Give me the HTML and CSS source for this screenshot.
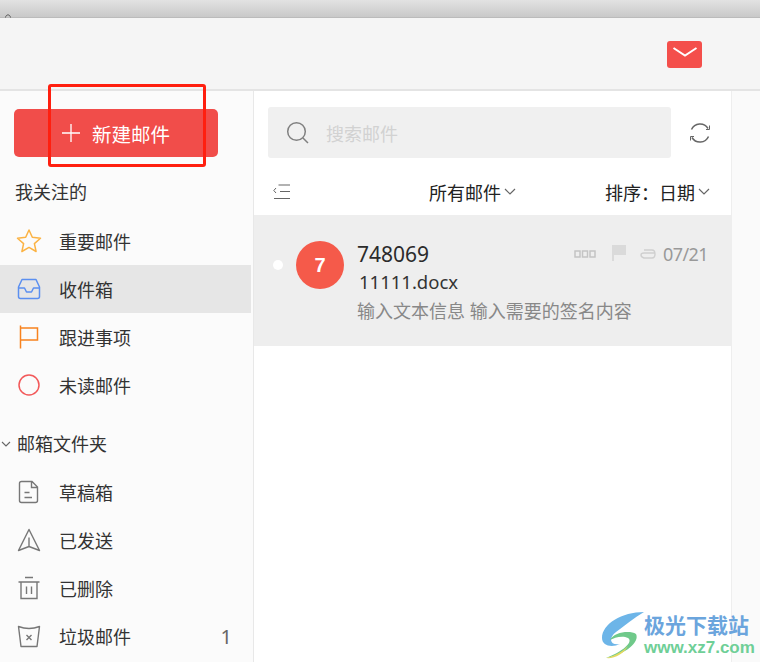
FILE: index.html
```html
<!DOCTYPE html>
<html lang="zh-CN">
<head>
  <meta charset="UTF-8" />
  <title>邮件</title>
  <link rel="stylesheet" href="styles.css">
</head>
<body>
  <div class="top-strip">
    <svg class="strip-mark" width="8" height="5" viewBox="0 0 8 5"><path d="M1.5 4.5 C2 1 6 1 6.500 4.500" fill="none" stroke="#555" stroke-width="1"/></svg>
  </div>

  <header class="header">
    <div class="mail-badge">
      <svg width="26" height="12" viewBox="0 0 26 12"><path d="M1.500 2 L13 9.500 L24.500 2" fill="none" stroke="#fff" stroke-width="2"/></svg>
    </div>
  </header>

  <div class="main">
    <aside class="sidebar">
      <button class="new-btn">
        <svg width="18" height="18" viewBox="0 0 18 18"><path d="M9 0 V18 M0 9 H18" stroke="#fff" stroke-width="1.300"/></svg>
        <span>新建邮件</span>
      </button>

      <div class="side-title">我关注的</div>
      <div class="side-item">
        <svg class="side-icon" viewBox="0 0 26 26"><path d="M13 2 L16.300 9.300 L24.500 10.200 L18.400 15.600 L20.100 23.500 L13 19.400 L5.900 23.500 L7.600 15.600 L1.500 10.200 L9.700 9.300 Z" fill="none" stroke="#fbb344" stroke-width="1.500" stroke-linejoin="round"/></svg>
        <span>重要邮件</span>
      </div>
      <div class="side-item active">
        <svg class="side-icon" viewBox="0 0 26 26"><path d="M6 3.500 H20 L23.500 11 V20.500 Q23.500 22.500 21.500 22.500 H4.500 Q2.500 22.500 2.500 20.500 V11 Z M2.500 12 H8.500 L10.500 16 H15.500 L17.500 12 H23.500" fill="none" stroke="#5b8ff0" stroke-width="1.500" stroke-linejoin="round"/></svg>
        <span>收件箱</span>
      </div>
      <div class="side-item">
        <svg class="side-icon" viewBox="0 0 26 26"><path d="M4.500 1.500 V24.500 M4.500 4 H21.500 V16 H4.500" fill="none" stroke="#f8821e" stroke-width="1.500"/></svg>
        <span>跟进事项</span>
      </div>
      <div class="side-item">
        <svg class="side-icon" viewBox="0 0 26 26"><circle cx="13" cy="13" r="10" fill="none" stroke="#f2595a" stroke-width="1.500"/></svg>
        <span>未读邮件</span>
      </div>

      <div class="folder-title">
        <svg width="10" height="6" viewBox="0 0 10 6"><path d="M1 1 L5 5 L9 1" fill="none" stroke="#666" stroke-width="1.100"/></svg>
        <span>邮箱文件夹</span>
      </div>
      <div class="side-item">
        <svg class="side-icon" viewBox="0 0 26 26"><path d="M5.500 2.500 H16 L21.500 8 V21.500 Q21.500 23.500 19.500 23.500 H5.500 Q3.500 23.500 3.500 21.500 V4.500 Q3.500 2.500 5.500 2.500 Z M15.500 2.500 V8.500 H21.500 M8.500 13.500 H13.500 M8.500 18.500 H16" fill="none" stroke="#777" stroke-width="1.400"/></svg>
        <span>草稿箱</span>
      </div>
      <div class="side-item">
        <svg class="side-icon" viewBox="0 0 26 26"><path d="M13 2.500 L23.500 23.500 L13 19.500 L2.500 23.500 Z M13 10.500 V19.500" fill="none" stroke="#777" stroke-width="1.400" stroke-linejoin="round"/></svg>
        <span>已发送</span>
      </div>
      <div class="side-item">
        <svg class="side-icon" viewBox="0 0 26 26"><path d="M2.500 7 H23.500 M9 2.500 H17 M5 7 V23.500 H21 V7 M10.500 11.500 V19 M15.500 11.500 V19" fill="none" stroke="#777" stroke-width="1.400"/></svg>
        <span>已删除</span>
      </div>
      <div class="side-item">
        <svg class="side-icon" viewBox="0 0 26 26"><path d="M2.500 3.500 Q13 7.500 23.500 3.500 L21 23.500 H5 Z M10.500 12 L15.500 17 M15.500 12 L10.500 17" fill="none" stroke="#777" stroke-width="1.400" stroke-linejoin="round"/></svg>
        <span>垃圾邮件</span>
        <span class="count">1</span>
      </div>
    </aside>

    <section class="list">
      <div class="search-row">
        <div class="search-box">
          <svg width="24" height="24" viewBox="0 0 24 24"><circle cx="10.500" cy="10.500" r="8.800" fill="none" stroke="#808080" stroke-width="1.500"/><path d="M17 17 L22 22" stroke="#808080" stroke-width="1.500"/></svg>
          <span>搜索邮件</span>
        </div>
        <svg width="22" height="22" viewBox="0 0 22 22"><path d="M2.500 7.500 A9.300 9.300 0 0 1 19 6.500 M19.500 14.500 A9.300 9.300 0 0 1 3 15.500" fill="none" stroke="#666" stroke-width="1.500"/><path d="M20.500 3.500 V7.500 H17 M1.500 18.500 V14.500 H5" fill="none" stroke="#666" stroke-width="1"/></svg>
      </div>

      <div class="filter-row">
        <svg class="filter-icon" width="18" height="16" viewBox="0 0 18 16"><path d="M5.500 1 H17 M7 7.500 H17 M1 14.500 H17" fill="none" stroke="#666" stroke-width="1.200"/><path d="M3 4 L0.800 6.500 L3 9" fill="none" stroke="#666" stroke-width="1"/></svg>
        <div class="filter-all">
          <span>所有邮件</span>
          <svg width="12" height="7" viewBox="0 0 12 7"><path d="M1 1 L6 6 L11 1" fill="none" stroke="#666" stroke-width="1.200"/></svg>
        </div>
        <div class="filter-sort">
          <span>排序：日期</span>
          <svg width="12" height="7" viewBox="0 0 12 7"><path d="M1 1 L6 6 L11 1" fill="none" stroke="#666" stroke-width="1.200"/></svg>
        </div>
      </div>

      <div class="mail-row">
        <div class="dot"></div>
        <div class="avatar">7</div>
        <div class="mail-body">
          <div class="mail-top">
            <span class="sender">748069</span>
            <div class="mail-meta">
              <svg width="22" height="8" viewBox="0 0 22 8"><path d="M1 1 H6 V7 H1 Z M8.500 1 H13.500 V7 H8.500 Z M16 1 H21 V7 H16 Z" fill="none" stroke="#c4c4c4" stroke-width="1.500"/></svg>
              <svg class="meta-flag" width="14" height="16" viewBox="0 0 14 16"><path d="M0 0 H14 V10 H2 V16 H0 Z" fill="#dadada"/></svg>
              <svg class="meta-clip" width="16" height="10" viewBox="0 0 16 10"><path d="M15 4 H4 Q1 4 1 6 T4 9 H12 Q15 9 15 5 T12 1 H4" fill="none" stroke="#cfcfcf" stroke-width="1.400"/></svg>
              <span class="date">07/21</span>
            </div>
          </div>
          <div class="subject">11111.docx</div>
          <div class="preview">输入文本信息 输入需要的签名内容</div>
        </div>
      </div>
    </section>

    <div class="detail"></div>
  </div>

  <div class="red-box"></div>

  <div class="watermark">
    <svg width="44" height="50" viewBox="0 0 44 50">
      <path d="M44 2 C22 2 2 14 2 28 C2 36 12 38 20 34 C10 36 8 28 16 22 C24 16 34 8 44 2 Z" fill="#6db5e8"/>
      <path d="M10 30 C14 22 30 20 36 24 C40 32 26 44 6 48 C22 42 34 32 28 28 C22 25 14 28 10 30 Z" fill="#6fc98a"/>
      <path d="M6 48 C14 46 22 42 28 36 C24 44 14 49 6 48 Z" fill="#e3d95f"/>
    </svg>
    <div class="wm-text">
      <div class="wm-title">极光下载站</div>
      <div class="wm-url">www.xz7.com</div>
    </div>
  </div>
</body>
</html>
```

FILE: styles.css
```css
* {
  box-sizing: border-box;
}

body {
  margin: 0;
  width: 760px;
  height: 662px;
  overflow: hidden;
  position: relative;
  display: flex;
  flex-direction: column;
  font-family: "Noto Sans", "Noto Sans CJK SC", sans-serif;
  font-size: 18px;
  color: #333;
  background-color: #fafafa;
}

svg {
  display: block;
  flex-shrink: 0;
}

.top-strip {
  height: 18px;
  padding: 13px 0 0 4px;
  background: linear-gradient(#e2e2e2, #c9c9c9);
  border-bottom: 1px solid #bbb;
}

.header {
  height: 73px;
  display: flex;
  justify-content: flex-end;
  align-items: flex-start;
  padding: 23px 58px 0 0;
  background-color: #f5f5f5;
  border-bottom: 2px solid #e4e4e4;
}

.mail-badge {
  width: 35px;
  height: 27px;
  display: flex;
  justify-content: center;
  padding-top: 5px;
  border-radius: 3px;
  background-color: #f44f4b;
}

.main {
  flex: 1;
  display: flex;
  min-height: 0;
}

/* left column */
.sidebar {
  width: 254px;
  padding-top: 18px;
  background-color: #fbfbfb;
  border-right: 1px solid #e8e8e8;
}

.new-btn {
  width: 204px;
  height: 48px;
  margin-left: 14px;
  padding: 0 0 0 48px;
  display: flex;
  align-items: center;
  gap: 12px;
  border: none;
  border-radius: 5px;
  background-color: #f14d4a;
  color: #fff;
  font-family: inherit;
  font-size: 19.500px;
}

.side-title {
  height: 24px;
  margin: 23px 0 13px 15px;
  line-height: 24px;
}

.side-item {
  height: 48px;
  display: flex;
  align-items: center;
  gap: 17px;
  padding: 0 21px 0 16px;
}

.side-item.active {
  background-color: #e6e6e6;
  margin-right: 2px;
}

.side-icon {
  width: 26px;
  height: 26px;
}

.count {
  margin-left: auto;
  font-size: 20px;
  color: #666;
}

.folder-title {
  height: 24px;
  margin: 23px 0 12px;
  display: flex;
  align-items: center;
  gap: 6px;
  padding-left: 1px;
  line-height: 24px;
}

/* mail list */
.list {
  width: 478px;
  background-color: #fff;
  border-right: 1px solid #eee;
}

.search-row {
  display: flex;
  align-items: center;
  gap: 18px;
  padding: 16px 0 0 14px;
}

.search-box {
  width: 403px;
  height: 51px;
  display: flex;
  align-items: center;
  gap: 16px;
  padding-left: 18px;
  border-radius: 3px;
  background-color: #f0f0f0;
  color: #d2d2d2;
}

.filter-row {
  height: 59px;
  display: flex;
  align-items: center;
  padding: 10px 21px 0 19px;
  border-bottom: 2px solid #eee;
  color: #222;
}

.filter-icon {
  margin-right: 138px;
}

.filter-all,
.filter-sort {
  display: flex;
  align-items: center;
  gap: 3px;
}

.filter-sort {
  margin-left: auto;
}

.mail-row {
  height: 129px;
  display: flex;
  align-items: flex-start;
  padding: 24px 23px 0 19px;
  background-color: #eee;
}

.dot {
  width: 10px;
  height: 10px;
  margin-top: 19px;
  border-radius: 50%;
  background-color: #fff;
}

.avatar {
  width: 48px;
  height: 48px;
  margin-left: 13px;
  display: flex;
  justify-content: center;
  align-items: center;
  border-radius: 50%;
  background-color: #f55a4a;
  color: #fff;
  font-family: "Liberation Sans", sans-serif;
  font-size: 20px;
  font-weight: bold;
}

.mail-body {
  flex: 1;
  margin: -1px 0 0 13px;
}

.mail-top {
  height: 28px;
  display: flex;
  justify-content: space-between;
  align-items: center;
}

.sender {
  font-size: 21px;
  color: #2b2b2b;
  line-height: 28px;
}

.mail-meta {
  display: flex;
  align-items: center;
}

.meta-flag {
  margin: -2px 0 0 16px;
}

.meta-clip {
  margin-left: 14px;
}

.date {
  margin-left: 7px;
  color: #999;
  letter-spacing: -0.600px;
}

.subject {
  height: 28px;
  padding-left: 2px;
  line-height: 28px;
  font-size: 18.500px;
  color: #333;
}

.preview {
  height: 28px;
  margin-top: 1px;
  line-height: 28px;
  color: #888;
}

.detail {
  flex: 1;
  background-color: #fafafa;
}

/* overlays */
.red-box {
  position: absolute;
  left: 48px;
  top: 84px;
  width: 158px;
  height: 83px;
  border: 3px solid #ff1f0f;
  border-radius: 3px;
}

.watermark {
  position: absolute;
  left: 600px;
  top: 610px;
  display: flex;
  align-items: center;
}

.wm-title {
  font-size: 21px;
  font-weight: bold;
  line-height: 26px;
  color: #6ba5dd;
}

.wm-url {
  font-family: "Liberation Sans", sans-serif;
  font-size: 17px;
  font-weight: bold;
  line-height: 20px;
  color: #6fcf97;
}
```
